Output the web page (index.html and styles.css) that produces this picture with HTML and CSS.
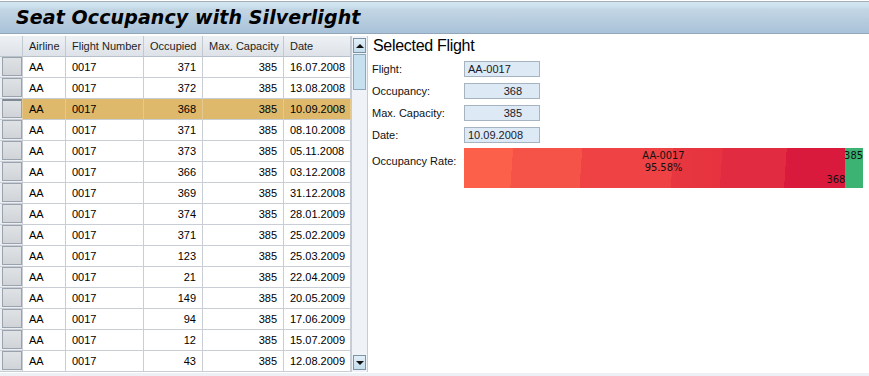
FILE: index.html
```html
<!DOCTYPE html>
<html lang="en">
<head>
    <meta charset="UTF-8">
    <meta name="viewport" content="width=device-width, initial-scale=1.0">
    <title>Seat Occupancy with Silverlight</title>
    <link rel="stylesheet" href="styles.css">
</head>
<body>
    <div class="title-bar">
        <h1>Seat Occupancy with Silverlight</h1>
    </div>

    <div class="main">
        <div class="grid">
            <div class="grid-rows">
                <div class="grid-row grid-head">
                    <div class="cell row-head"></div>
                    <div class="cell">Airline</div>
                    <div class="cell">Flight Number</div>
                    <div class="cell">Occupied</div>
                    <div class="cell">Max. Capacity</div>
                    <div class="cell">Date</div>
                </div>
                <div class="grid-row">
                    <div class="cell row-head"><span class="row-btn"></span></div>
                    <div class="cell">AA</div><div class="cell">0017</div>
                    <div class="cell num">371</div><div class="cell num">385</div>
                    <div class="cell">16.07.2008</div>
                </div>
                <div class="grid-row">
                    <div class="cell row-head"><span class="row-btn"></span></div>
                    <div class="cell">AA</div><div class="cell">0017</div>
                    <div class="cell num">372</div><div class="cell num">385</div>
                    <div class="cell">13.08.2008</div>
                </div>
                <div class="grid-row selected">
                    <div class="cell row-head"><span class="row-btn"></span></div>
                    <div class="cell">AA</div><div class="cell">0017</div>
                    <div class="cell num">368</div><div class="cell num">385</div>
                    <div class="cell">10.09.2008</div>
                </div>
                <div class="grid-row">
                    <div class="cell row-head"><span class="row-btn"></span></div>
                    <div class="cell">AA</div><div class="cell">0017</div>
                    <div class="cell num">371</div><div class="cell num">385</div>
                    <div class="cell">08.10.2008</div>
                </div>
                <div class="grid-row">
                    <div class="cell row-head"><span class="row-btn"></span></div>
                    <div class="cell">AA</div><div class="cell">0017</div>
                    <div class="cell num">373</div><div class="cell num">385</div>
                    <div class="cell">05.11.2008</div>
                </div>
                <div class="grid-row">
                    <div class="cell row-head"><span class="row-btn"></span></div>
                    <div class="cell">AA</div><div class="cell">0017</div>
                    <div class="cell num">366</div><div class="cell num">385</div>
                    <div class="cell">03.12.2008</div>
                </div>
                <div class="grid-row">
                    <div class="cell row-head"><span class="row-btn"></span></div>
                    <div class="cell">AA</div><div class="cell">0017</div>
                    <div class="cell num">369</div><div class="cell num">385</div>
                    <div class="cell">31.12.2008</div>
                </div>
                <div class="grid-row">
                    <div class="cell row-head"><span class="row-btn"></span></div>
                    <div class="cell">AA</div><div class="cell">0017</div>
                    <div class="cell num">374</div><div class="cell num">385</div>
                    <div class="cell">28.01.2009</div>
                </div>
                <div class="grid-row">
                    <div class="cell row-head"><span class="row-btn"></span></div>
                    <div class="cell">AA</div><div class="cell">0017</div>
                    <div class="cell num">371</div><div class="cell num">385</div>
                    <div class="cell">25.02.2009</div>
                </div>
                <div class="grid-row">
                    <div class="cell row-head"><span class="row-btn"></span></div>
                    <div class="cell">AA</div><div class="cell">0017</div>
                    <div class="cell num">123</div><div class="cell num">385</div>
                    <div class="cell">25.03.2009</div>
                </div>
                <div class="grid-row">
                    <div class="cell row-head"><span class="row-btn"></span></div>
                    <div class="cell">AA</div><div class="cell">0017</div>
                    <div class="cell num">21</div><div class="cell num">385</div>
                    <div class="cell">22.04.2009</div>
                </div>
                <div class="grid-row">
                    <div class="cell row-head"><span class="row-btn"></span></div>
                    <div class="cell">AA</div><div class="cell">0017</div>
                    <div class="cell num">149</div><div class="cell num">385</div>
                    <div class="cell">20.05.2009</div>
                </div>
                <div class="grid-row">
                    <div class="cell row-head"><span class="row-btn"></span></div>
                    <div class="cell">AA</div><div class="cell">0017</div>
                    <div class="cell num">94</div><div class="cell num">385</div>
                    <div class="cell">17.06.2009</div>
                </div>
                <div class="grid-row">
                    <div class="cell row-head"><span class="row-btn"></span></div>
                    <div class="cell">AA</div><div class="cell">0017</div>
                    <div class="cell num">12</div><div class="cell num">385</div>
                    <div class="cell">15.07.2009</div>
                </div>
                <div class="grid-row">
                    <div class="cell row-head"><span class="row-btn"></span></div>
                    <div class="cell">AA</div><div class="cell">0017</div>
                    <div class="cell num">43</div><div class="cell num">385</div>
                    <div class="cell">12.08.2009</div>
                </div>
            </div>

            <div class="scrollbar">
                <div class="sb-btn"><span class="arrow-up"></span></div>
                <div class="sb-thumb"></div>
                <div class="sb-btn sb-down"><span class="arrow-down"></span></div>
            </div>
        </div>

        <div class="details">
            <h2>Selected Flight</h2>
            <div class="form">
                <div class="label">Flight:</div>
                <div class="box">AA-0017</div>

                <div class="label">Occupancy:</div>
                <div class="box num">368</div>

                <div class="label">Max. Capacity:</div>
                <div class="box num">385</div>

                <div class="label">Date:</div>
                <div class="box">10.09.2008</div>

                <div class="label label-top">Occupancy Rate:</div>
                <div class="bar">
                    <div class="bar-fill" style="width: 95.58%;">
                        <span class="bar-value">368</span>
                    </div>
                    <div class="bar-rest"></div>
                    <div class="bar-caption">AA-0017<br>95.58%</div>
                    <span class="bar-max">385</span>
                </div>
            </div>
        </div>
    </div>

    <div class="status-strip"></div>
</body>
</html>
```

FILE: styles.css
```css
body {
    margin: 0;
    background-color: #ffffff;
    font-family: "Liberation Sans", Arial, sans-serif;
    font-size: 11px;
    color: #000;
}

.title-bar {
    margin-top: 1px;
    height: 31px;
    border-top: 1px solid #a3adb8;
    border-bottom: 1px solid #93a7ba;
    background: linear-gradient(#d4e7f1 0, #c9e0ec 5px, #c3d6e4 7px, #a9c2d9 100%);
}

h1 {
    margin: 0;
    padding-left: 16px;
    font-family: "DejaVu Sans", Verdana, sans-serif;
    font-size: 19px;
    font-style: italic;
    font-weight: bold;
    line-height: 31px;
    letter-spacing: 0.1px;
    color: #000;
}

.main {
    display: flex;
    margin-top: 2px;
    height: 336px;
}

/* data grid */
.grid {
    display: flex;
    width: 368px;
}

.grid-rows {
    width: 351px;
}

.grid-row {
    display: grid;
    grid-template-columns: 23px 43px 78px 59px 81px 67px;
    height: 21px;
}

.cell {
    box-sizing: border-box;
    height: 21px;
    padding: 0 6px;
    border-right: 1px solid #c9ced6;
    border-bottom: 1px solid #c9ced6;
    line-height: 20px;
    white-space: nowrap;
    overflow: hidden;
}

.cell.num {
    text-align: right;
}

.grid-head .cell {
    background: linear-gradient(#eef1f4, #dde2e8);
    border-right-color: #c3c9d1;
    border-bottom-color: #b9c1ca;
    color: #1e1e1e;
}

.row-head {
    padding: 0 0 0 2px;
    background-color: #eceff2;
}

.row-btn {
    display: block;
    box-sizing: border-box;
    width: 20px;
    height: 19px;
    border: 1px solid #9aa3ad;
    background: linear-gradient(#dfe2e5, #d0d4d8);
}

.selected .cell {
    background-color: #deb86b;
    border-right-color: #e3c98f;
}

.selected .row-head {
    background-color: #eceff2;
}

.selected .row-btn {
    border-top: 2px solid #7f8993;
}

/* scrollbar */
.scrollbar {
    display: flex;
    flex-direction: column;
    box-sizing: border-box;
    width: 17px;
    border-left: 1px solid #c5ccd5;
    border-right: 1px solid #c5ccd5;
    background-color: #eff3f7;
}

.sb-btn {
    display: flex;
    align-items: center;
    justify-content: center;
    box-sizing: border-box;
    height: 15px;
    margin: 2px 1px 0;
    border: 1px solid #7d93a8;
    background: linear-gradient(#e2eff7, #c4dded);
}

.sb-down {
    margin-top: auto;
    margin-bottom: 2px;
}

.arrow-up {
    width: 0;
    height: 0;
    border-left: 4px solid transparent;
    border-right: 4px solid transparent;
    border-bottom: 4px solid #111;
}

.arrow-down {
    width: 0;
    height: 0;
    border-left: 4px solid transparent;
    border-right: 4px solid transparent;
    border-top: 4px solid #111;
}

.sb-thumb {
    box-sizing: border-box;
    height: 36px;
    margin: 1px 1px 0;
    border: 1px solid #91a7ba;
    background-color: #c7e0ef;
}

/* details panel */
.details {
    flex: 1;
    padding: 1px 0 0 4px;
}

h2 {
    margin: 0 0 6px 1px;
    font-size: 16px;
    font-weight: normal;
    line-height: 18px;
    letter-spacing: -0.3px;
}

.form {
    display: grid;
    grid-template-columns: 92px auto;
    row-gap: 6px;
    justify-items: start;
}

.label {
    align-self: center;
    line-height: 16px;
    color: #111;
}

.label-top {
    align-self: start;
    padding-top: 4px;
}

.box {
    box-sizing: border-box;
    width: 76px;
    height: 16px;
    padding: 0 3px;
    border: 1px solid #a6b3c0;
    background-color: #dde9f4;
    line-height: 14px;
    color: #1a1a2a;
}

.box.num {
    text-align: right;
    padding-right: 17px;
}

/* occupancy bar */
.bar {
    position: relative;
    display: flex;
    width: 399px;
    height: 40px;
    margin-top: -1px;
    font-family: "DejaVu Sans Condensed", "DejaVu Sans", sans-serif;
    font-size: 11px;
    line-height: 12px;
    color: #111;
}

.bar-fill {
    position: relative;
    background: linear-gradient(94deg,
        #fc5f4a 0, #fc5f4a 49px,
        #f65348 49px, #f65348 118px,
        #ee4244 118px, #ee4244 209px,
        #e8373f 209px, #e6333f 258px,
        #e12b40 258px, #e12b40 322px,
        #da1a3c 322px, #da1a3c 100%);
}

.bar-rest {
    flex: 1;
    background-color: #3db373;
}

.bar-caption {
    position: absolute;
    top: 2px;
    left: 0;
    right: 0;
    text-align: center;
}

.bar-value {
    position: absolute;
    right: 0;
    bottom: 2px;
}

.bar-max {
    position: absolute;
    top: 2px;
    right: 0;
}

.status-strip {
    height: 3px;
    margin-top: 1px;
    background-color: #edf1f5;
}
```
